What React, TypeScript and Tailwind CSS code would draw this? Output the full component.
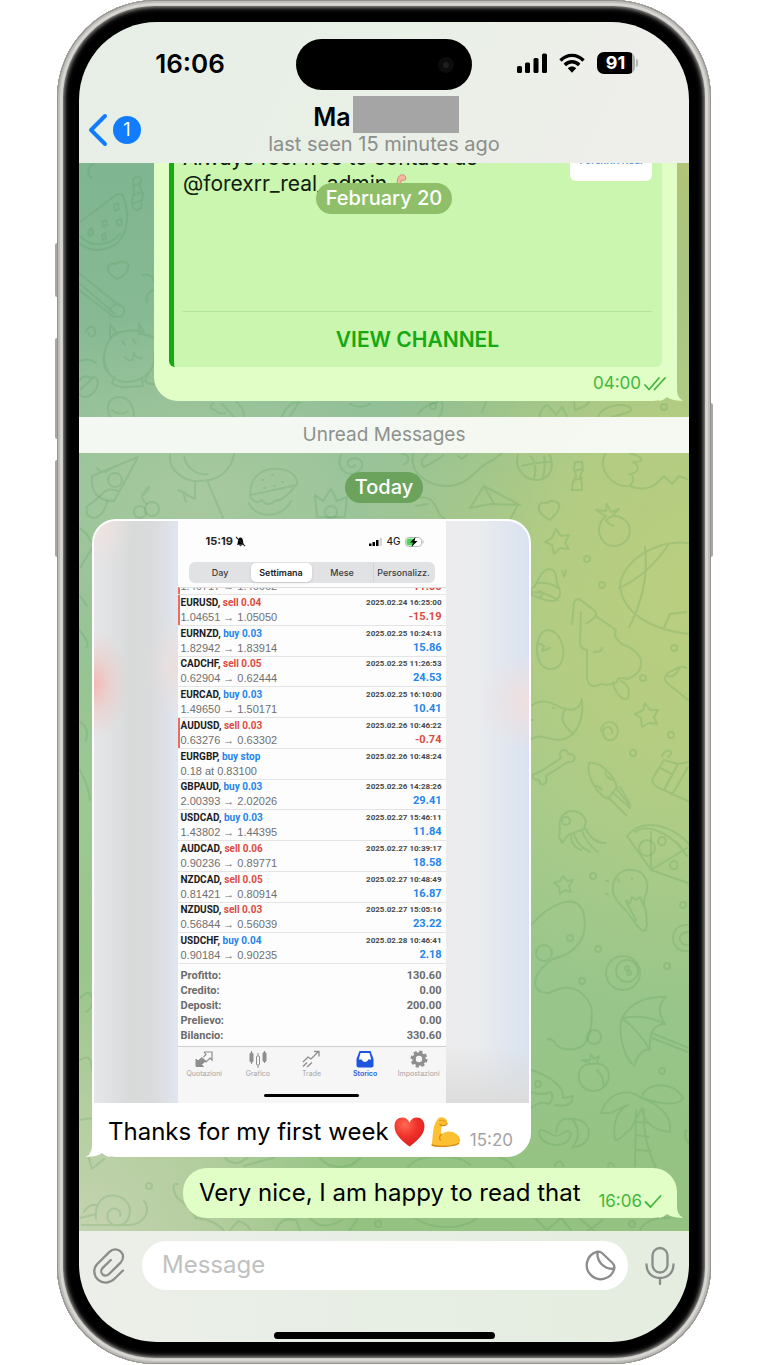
import React from "react";

type Trade = {
  symbol: string;
  side: "buy" | "sell";
  action: string;
  detail: string;
  time: string;
  profit?: string;
  flagged?: boolean;
};

const trades: Trade[] = [
  { symbol: "EURUSD", side: "sell", action: "sell 0.04", detail: "1.04651 → 1.05050", time: "2025.02.24 16:25:00", profit: "-15.19", flagged: true },
  { symbol: "EURNZD", side: "buy", action: "buy 0.03", detail: "1.82942 → 1.83914", time: "2025.02.25 10:24:13", profit: "15.86" },
  { symbol: "CADCHF", side: "sell", action: "sell 0.05", detail: "0.62904 → 0.62444", time: "2025.02.25 11:26:53", profit: "24.53" },
  { symbol: "EURCAD", side: "buy", action: "buy 0.03", detail: "1.49650 → 1.50171", time: "2025.02.25 16:10:00", profit: "10.41" },
  { symbol: "AUDUSD", side: "sell", action: "sell 0.03", detail: "0.63276 → 0.63302", time: "2025.02.26 10:46:22", profit: "-0.74", flagged: true },
  { symbol: "EURGBP", side: "buy", action: "buy stop", detail: "0.18 at 0.83100", time: "2025.02.26 10:48:24" },
  { symbol: "GBPAUD", side: "buy", action: "buy 0.03", detail: "2.00393 → 2.02026", time: "2025.02.26 14:28:26", profit: "29.41" },
  { symbol: "USDCAD", side: "buy", action: "buy 0.03", detail: "1.43802 → 1.44395", time: "2025.02.27 15:46:11", profit: "11.84" },
  { symbol: "AUDCAD", side: "sell", action: "sell 0.06", detail: "0.90236 → 0.89771", time: "2025.02.27 10:39:17", profit: "18.58" },
  { symbol: "NZDCAD", side: "sell", action: "sell 0.05", detail: "0.81421 → 0.80914", time: "2025.02.27 10:48:49", profit: "16.87" },
  { symbol: "NZDUSD", side: "sell", action: "sell 0.03", detail: "0.56844 → 0.56039", time: "2025.02.27 15:05:16", profit: "23.22" },
  { symbol: "USDCHF", side: "buy", action: "buy 0.04", detail: "0.90184 → 0.90235", time: "2025.02.28 10:46:41", profit: "2.18" },
];

const totals = [
  ["Profitto:", "130.60"],
  ["Credito:", "0.00"],
  ["Deposit:", "200.00"],
  ["Prelievo:", "0.00"],
  ["Bilancio:", "330.60"],
];

function Wallpaper() {
  return (
    <div className="absolute inset-0 bg-[radial-gradient(ellipse_340px_420px_at_100%_40%,#bace7f_0%,#b8ce7fdd_40%,#b8ce7f00_100%),radial-gradient(ellipse_200px_300px_at_100%_0%,#b3c577_0%,#b3c57700_100%),radial-gradient(ellipse_280px_260px_at_0%_100%,#c4d3b0_0%,#c0d2aab0_50%,#c0d2aa00_100%),radial-gradient(ellipse_300px_180px_at_20%_31%,#a8c99f_0%,#a8c99f00_100%),linear-gradient(180deg,#7fb591_0%,#8fbf96_30%,#9cc892_60%,#94c281_100%)]">
      <svg
        className="h-full w-full"
        viewBox="79 163 610 1068"
        preserveAspectRatio="xMidYMid slice"
        fill="none"
        stroke="#4f9455"
        strokeOpacity="0.2"
        strokeWidth="2"
        strokeLinecap="round"
        strokeLinejoin="round"
        aria-hidden="true"
      >
        <path d="M80 222 116 195q6-4 8 4c8 24 0 44-16 49-12 4-22 1-29-5M80 236c10 12 30 10 40-2" />
        <path d="M114 205l4-2 1 6-4 2zM102 222l4-2 1 5-4 2zM116 221l5-2 1 5-4 2zM88 231l4-3 1 6-4 2zM102 235l3-2 1 6-3 1z" />
        <path d="M93 164c-6 4-6 10-1 14M133 179q5-5 8 0l-1 8 3 7-2 14q-5 4-8 0l-1-8 2-7zM133 186l8-3M134 195l8-3M134 203l8-3" />
        <path d="M118 279c-16-7-10-18-2-15 4-4 14-3 12 4-1 5-6 9-10 11z" />
        <path d="M79 273l38 31c8 2 9 8 5 12l-8 1-35-27M84 277l36 29M79 283l36 31M110 316c-2-6 3-12 9-12" />
        <path d="M143 275q8-2 11 6M153 290q-8 4-6 12M86 332c2-8 10-6 9 1-1 5-7 4-6 0M80 361q8-4 16 2" />
        <path d="M108 372c-10-20 2-38 10-38l-8-9v13l4-4q14-6 30-2l-5-8v9M140 334q6 0 14 4M105 352c-6 14 6 30 22 30s30-12 27-30M115 376l-3 7q6 5 16 4l15-1-1-8M148 374l-3 7q4 4 9 3M122 341l3 4M133 339l3 5M125 357q4 6 8 2 0-6 1-6 2 6 8 5" />
        <path d="M80 380q4-6 10-2c8-4 12 6 2 16-5 5-11 3-13 0M80 390l14-13" />
        <path d="M110 417c-6-14 2-20 9-20 9 0 15 8 15 20M112 410c4 4 12 5 16 1M213 403q-6 5 2 7 4 5 10 3M222 404l12 13M236 402q8 5 8 15M282 417q6-16 18-14M290 416l8-12M350 404q10 6 20 0" />
        <path d="M438 402q-14 3-20 12M442 402q2 8-3 15M486 402l-4 10M539 417q2-10 9-12l8 10 6-8 5 9M574 402l1 8q12-4 14-8M598 417c4-12 24-14 32-10 4 6-6 6-18 10" />
        <circle cx="433" cy="406" r="3" /><circle cx="664" cy="407" r="3" />
        <path d="M92 476l46-19-24 44q-24 0-22-25zM97 468q6 8 14 0M114 501l20-36" />
        <circle cx="115" cy="480" r="7" /><path d="M118 491q-10-4-16 3-8 8-15 12c-2 10 3 12 8 12 8-3 12-12 12-17" />
        <path d="M144 495q8-10 4-8l-6 8q0 6 5 9" /><circle cx="140" cy="512" r="6" /><circle cx="152" cy="509" r="7" />
        <path d="M170 455c-2 14 14 28 30 26 22 0 32-14 34-27M184 456c2 12 14 20 24 18M195 481v18l-12-6 3 9M186 493l-8-3M207 480l16 38" />
        <path d="M250 495c0-20 14-28 30-26 12 2 18 8 17 16zM250 497q6 8 12 3 6 8 14 0 6 2 18-12M249 503c6 16 34 16 42-2M262 480h1M272 475h1M282 482h1M264 488h1M274 486h1" />
        <path d="M315 495l8 6 8-12 6 12 10-4-2 20h-28z" /><circle cx="331" cy="512" r="6" />
        <path d="M341 455c-6 12 6 22 14 18 12-4 8-18-4-14-8 4 0 12 4 6" />
        <path d="M402 454c8 0 8 8 2 10M413 454c-4 20 16 32 34 32 24 0 28-20 46-26l8-6M424 467q-6-6 4-13M424 467q12-6 20-12M458 456l4 3 5-4" />
        <path d="M518 455c-4 12 6 26 20 25 14-2 16-14 12-25M522 466q14-4 28-4M530 456q8 6 4 23M544 456q2 8-1 21" />
        <path d="M575 462h7l1 8-3 6 2 8 0 6h-10l1-8 3-6-2-8zM574 471l8-2M574 480l8-2" />
        <path d="M605 454c-8 16 8 34 24 32 8-6 3-12 0-12 12-1 10-10 4-12 16 0 4-8-2-8M630 486q14 6 26-2l8-8 8 8 7-8 8 3" />
        <path d="M470 508l14-22 34 18-12 24M470 508l20-4 30 1M484 486l10 18M411 500c18-8 24 2 28 14l9 8-8 1M416 506l12-2" />
        <path d="M550 520c-16-8-13-20-3-17 5-4 14-1 12 5-2 6-5 8-9 12z" />
        <path d="M606 516c-12 8-8 30 8 30 16 0 22-20 8-28-6-3-12-2-16 2q2 4 8 6M606 516l-10-6 10 1 1-7 4 8 8-3-6 6" />
        <path d="M556 529l5 7 8-1-4 8 4 6-9-1-6 6-2-9-7-3 7-4z" />
        <circle cx="587" cy="559" r="3" /><circle cx="602" cy="585" r="3" /><circle cx="674" cy="648" r="3" /><circle cx="643" cy="678" r="3" /><circle cx="671" cy="735" r="3" /><circle cx="633" cy="753" r="3" />
        <path d="M535 586l4-8c5-9 11-11 15-7 4 5 1 12 5 17 3 7-1 13-7 13-8 0-15-4-20-6-3-4 0-7 3-9zM537 583q12-1 21 5M532 592q14 0 26 8M539 591a3 3 0 1 1 0 6M562 571l2 5M566 570l-2 7" />
        <path d="M572 624l2-21q2-7 8-2l13 10q3 4-2 8l-6 4M596 616l20 14q-4 6 6 14 20 8 19 20 0 10-14 15-10-3-10 3-8 4-16 2-12 6-14-6v-28q-8-1-7-10l1-28M594 652q8 0 8-4M613 682c1 12 16 26 16 10 0-6-5-10-8-11" />
        <path d="M548 630c-14 0-16 38 2 39 20 1 16-38-2-39zM538 643l6 3-2 5 8-3" />
        <path d="M531 706c10-8 20-4 29 1 12 6 20 2 22-8 2 18-4 36-18 40s-22-8-34 1M565 710q-8 12 9 24M553 708h1M531 720h2" />
        <path d="M535 774l8-4 18-12c-4-9 6-11 7-4 9-1 9 9 0 8l-22 14c2 10-6 11-7 4-8 0-7-6-4-6z" />
        <path d="M589 763c10-2 24 10 28 24l-9 12c-10-4-22-22-19-36zM605 772q1 6 8 8M595 787q2-3 7 3M608 797l18 18M612 792l18 16M616 788l14 18M620 787l10 17" />
        <path d="M688 543c-34-4-66 20-68 42 2 28 30 44 68 49M645 547c4 30-5 60-16 80M619 588q28-12 50-44M664 628l6-14 16-2" />
        <path d="M688 700l-22-18q-4-8 8-12 8-5 12-2M667 676q8 2 12-7M645 703l5 7 8 0-4 7 3 7-8-1-7 4-1-9-6-4 8-4zM601 731c1-12 16-12 17 0 0 12-15 12-15 2 0-8 10-8 9 0" />
        <path d="M654 776l10-16 14 4-14 26q-16-5-10-14zM664 790l26 12M678 764l10-2M662 756c4-10 14-4 6 1M672 795l16-28M660 768l12 6" />
        <path d="M560 829c-4-20 20-24 26-8l-2 8-16 6-6 8-3-6zM574 833q2 12 16 19M582 831q4 12 16 21M586 829q6 14 20 14M571 836q0 10 10 14" /><circle cx="566" cy="821" r="4" />
        <path d="M627 836c16-20 46-10 62 8M627 836l24 34 37 13M635 832c14-10 40 4 52 24M651 832v38l36-22" /><circle cx="647" cy="848" r="8" /><path d="M662 837c6 0 4 10-1 8-5-2-3-8 1-8zM674 861c6 0 4 10-1 8-5-2-3-8 1-8z" />
        <path d="M563 876l4 5 6-1-4 6 2 6-6-2-5 4-1-7-5-4 6-2z" />
        <path d="M637 921l-4-5c-2-6-16-14-17-24-2-16 10-24 20-22 12 1 18 14 12 26-2 5-1 10 1 16M637 921q6 10 11 10l2-6-1-13M639 920l-10-19 4 2 2-6 4 3 4-3 6 14M611 881h-2M609 894h2M622 882l-1-3M635 878v2" transform="translate(-3 0)" />
        <circle cx="593" cy="876" r="3" /><circle cx="683" cy="905" r="3" /><circle cx="570" cy="938" r="3" /><circle cx="598" cy="949" r="3" /><circle cx="582" cy="981" r="3" /><circle cx="667" cy="966" r="3" /><circle cx="662" cy="1071" r="3" />
        <path d="M688 925c-20-2-20 28 0 26M688 932c-12 0-10 14 0 13" />
        <path d="M531 925c20-22 44-32 52-14 6 24-4 42-30 48-20 12-26 34-4 34 12-6 26-10 38 6 8 10 4 24 3 34-4 18-22 20-34 12q-2-6-8-6" /><circle cx="594" cy="1037" r="7" /><circle cx="544" cy="953" r="8" />
        <circle cx="623" cy="973" r="17" /><circle cx="627" cy="971" r="11" /><circle cx="627" cy="968" r="2" /><circle cx="629" cy="973" r="2" />
        <path d="M622 1018c8-16 26-22 44-21-9 8-7 18-1 27-12 0-16 10-15 26-6-2-12 4-16 16-12-12-16-34-12-48zM622 1018q24-4 43 6M622 1018q18 14 28 32M654 1034l35 14M652 1038l36 14" />
        <path d="M592 1064c-18-2-18 27 2 27 20-1 20-32-2-27zM597 1070q8 8 6 18M590 1064l-8-4 8 0 1-6 3 5 5-3-2 6" />
        <path d="M641 1098c-14-12-34-4-40 15 14 2 18-6 27-8-10 4-16 18-13 35 8 0 8-8 15-10l12-22c2 16 12 22 28 24 2-14-8-26-28-34 10 4 36 10 41 0-8-16-36-18-42 0zM636 1110l-1 56M644 1110q-2 28 12 58M637 1122l10 1M636 1135l13 2M637 1150l14 1" />
        <path d="M531 1070c20 6 34 18 32 28l10-2q0 12-18 9M531 1108q10-8 18-4 6-6 2-12-10 4-20 0" /><circle cx="538" cy="1084" r="3" />
        <path d="M539 1133c2 14 30 18 32 0-8-6-8 6-18 2-8-4-14-8-14-2zM556 1132c2-14 10-14 15-13 20-2 26 24 4 28M572 1119q12 14 0 29" />
        <path d="M686 1130q-3 6 3 14M555 1166c0-6 8-6 8 0M608 1166c0-4 4-4 6 0" />
        <path d="M79 528q8 4 12 14M80 568l12-20M80 596l7 10M79 630q12 14 7 18M80 722q10 6 6 18M80 770q10 20 10 30M80 998q10-10 12 0t-6 14M80 1060q12-8 12 10M80 1120q12-4 20 2" />
        <path d="M88 1155l4 14 12-10" /><circle cx="149" cy="1186" r="3" />
        <path d="M178 1184c-8-2-4 12 2 16q8 6 16 18M80 1218l16-4M82 1225h48c18-2 20-18 14-24M96 1219c-4-36 44-26 32 0-6 12-24 6-20-6 4-8 14-4 12 3M84 1212q6-10 14-6" />
        <path d="M196 1218q20 2 28 13M230 1230l8-9q8 2 12 8M276 1230q6-14 18-10M296 1220l4 10M310 1218q12 14 32 2M350 1230l8-12M415 1218c16 12 48 12 62 0M535 1218l12 12 14-12 10 12M580 1219l14 11M602 1220q-8 8-14 10M640 1230q8-14 30-12" /><circle cx="378" cy="1224" r="3" /><circle cx="632" cy="1224" r="3" />
        <path d="M225 1158q10 10 22 0M244 1166q20-6 30-8M320 1158c10 12 30 12 40 0M408 1167c10-14 50-14 62-2M500 1158q10 2 14 10" />
      </svg>
    </div>
  );
}

function RightTail() {
  return (
    <svg className="absolute right-[-6px] bottom-0 h-6 w-6 text-[#e1fec6]" viewBox="0 0 24 24" fill="currentColor" aria-hidden="true">
      <path d="M18 0v11c0 6 1 10 6 12.700C17 24 12 23 8 20c-2.500 2.500-5 3.600-8 4V0z" />
    </svg>
  );
}

function StatusIcons() {
  return (
    <div className="flex items-center gap-3">
      <svg className="h-5 w-[30px]" viewBox="0 0 30 20" aria-hidden="true">
        <rect x="0" y="13" width="5" height="7" rx="1.500" />
        <rect x="8" y="9.500" width="5" height="10.500" rx="1.500" />
        <rect x="16.500" y="5" width="5" height="15" rx="1.500" />
        <rect x="25" y="0.500" width="5" height="19.500" rx="1.500" />
      </svg>
      <svg className="h-5 w-[26px]" viewBox="0 0 26 20" fill="none" stroke="#000" strokeWidth="3.400" aria-hidden="true">
        <path d="M1.500 7.500C8 .6 18 .6 24.500 7.500" />
        <path d="M5.800 12c4.200-4.300 10.200-4.300 14.400 0" />
        <path d="M8.800 15.300c2.400-2.400 6-2.400 8.400 0L13 19.700z" fill="#000" stroke="none" />
      </svg>
      <div className="flex items-center gap-px">
        <span className="flex h-[22px] w-[38px] items-center justify-center rounded-[7px] bg-[linear-gradient(90deg,#000_91%,#a9aca8_91%)] pr-px text-[18px] leading-none font-bold text-white">91</span>
        <span className="h-2 w-[2px] rounded-r-full bg-[#b4b7b2]" />
      </div>
    </div>
  );
}

function Header() {
  return (
    <header className="relative bg-[linear-gradient(115deg,#e6eee6_0%,#e9f0e6_50%,#eeeeea_85%)] pb-[7px]">
      <div className="grid grid-cols-[1fr_176px_1fr] items-center pt-[17px]">
        <span className="pb-[2px] pl-[5px] text-center text-[26px] leading-[49px] font-semibold">16:06</span>
        <span className="flex h-[51px] items-center justify-end rounded-full bg-black pr-[18px]">
          <span className="flex h-4 w-4 items-center justify-center rounded-full bg-[#0c0c0d]">
            <span className="h-[6px] w-[6px] rounded-full bg-[#1d1e20]" />
          </span>
        </span>
        <span className="flex justify-center pr-[6px] pb-[3px]">
          <StatusIcons />
        </span>
      </div>
      <div className="grid grid-cols-[1fr_auto_1fr] items-center pt-[6px]">
        <button type="button" aria-label="Back" className="flex items-center gap-[5px] pt-[7px] pl-[9px]">
          <svg className="h-[34px] w-5" viewBox="0 0 20 34" fill="none" stroke="#117dfe" strokeWidth="4" strokeLinecap="round" strokeLinejoin="round" aria-hidden="true">
            <path d="M17 3 3 17l14 14" />
          </svg>
          <span className="flex h-7 w-7 items-center justify-center rounded-full bg-[#117dfe] text-[18px] leading-none text-white">1</span>
        </button>
        <div className="flex flex-col items-center">
          <h1 className="flex h-[37px] items-center pl-1 text-[25px] font-semibold">
            <span className="pt-[6px]">Ma</span>
            <span className="ml-[2px] h-full w-[106px] bg-[#a5a5a5]" />
          </h1>
          <p className="text-[20px] leading-[23px] text-[#8b8e8a]">last seen 15 minutes ago</p>
        </div>
        <span />
      </div>
    </header>
  );
}

function DateChip({ children, tone }: { children: React.ReactNode; tone: string }) {
  return <span className={`rounded-full px-[10px] text-[20px] leading-[31px] font-medium text-white ${tone}`}>{children}</span>;
}

function ChannelMessage() {
  return (
    <article className="relative ml-[75px] mr-3 rounded-b-[24px] bg-[#e1fec6]">
      <div className="overflow-hidden px-[15px]">
        <div className="-mt-[18px] overflow-hidden rounded-md border-l-[5px] border-[#15a912] bg-[#caf6af] pr-[10px] pl-[9px]">
          <div className="flex h-[167px] items-start justify-between border-b border-[#b3e49b]">
            <p className="whitespace-nowrap text-[21px] leading-[26px] text-[#10200c]">
              Always feel free to contact us
              <br />
              @forexrr_real_admin{" "}
              <svg className="inline-block h-5 w-4 align-[-3px]" viewBox="0 0 16 20" aria-hidden="true">
                <path d="M3 18C5 10 3 3 8 1c4-1 6 2 4 5-2 1-4-1-4 1-1 4 3 4 5 7 0 4-6 6-10 4z" fill="#f3b9a0" stroke="#d98580" />
              </svg>
            </p>
            <span className="flex h-9 w-[82px] items-end justify-center rounded-md bg-white pb-[14px] text-[10px] leading-[13px] font-semibold whitespace-nowrap text-[#5b95d6]">ForexRR Real</span>
          </div>
          <button type="button" className="block w-full text-center text-[21px] leading-[55px] font-semibold text-[#15a912]">VIEW CHANNEL</button>
        </div>
      </div>
      <p className="relative z-10 flex items-center justify-end gap-[3px] pt-[4px] pr-[11px] pb-[5px] text-[17px] leading-[25px] text-[#3fb83c]">
        04:00
        <svg className="h-4 w-[22px]" viewBox="0 0 22 16" fill="none" stroke="currentColor" strokeWidth="1.800" strokeLinecap="round" strokeLinejoin="round" aria-label="Read">
          <path d="M1 9l4 4.500L15 2M10.500 13.500L21 2" />
        </svg>
      </p>
      <RightTail />
    </article>
  );
}

function TabIcon({ name }: { name: string }) {
  if (name === "Quotazioni")
    return (
      <svg className="h-[18px] w-[18px]" viewBox="0 0 18 18" aria-hidden="true">
        <path d="M1 16.500h7.500L6.500 14.500 10.500 11 7 7.500 3 11 1 9z" fill="#8e8e8e" stroke="#8e8e8e" />
        <path d="M9 2h8v8l-2-2-4 4-1.500-1.500M8.500 7 11 4.500 9 2" fill="none" stroke="#8e8e8e" strokeWidth="1.200" />
      </svg>
    );
  if (name === "Grafico")
    return (
      <svg className="h-[18px] w-[18px]" viewBox="0 0 18 18" fill="#8e8e8e" stroke="#8e8e8e" aria-hidden="true">
        <path d="M2.500 1v13M15.500 1v12M9 3v15" />
        <rect x="1" y="3" width="3" height="9" rx="1" />
        <rect x="14" y="2.500" width="3" height="9" rx="1" />
        <rect x="7.500" y="6" width="3" height="9" rx="1" fill="#f6f6f6" />
      </svg>
    );
  if (name === "Trade")
    return (
      <svg className="h-[18px] w-[18px]" viewBox="0 0 18 18" fill="none" stroke="#8e8e8e" strokeWidth="1.300" aria-hidden="true">
        <path d="M1 12l5-5 3 2 7.500-7.500M12 1.500h5v5M1 16.500l4-4M5 17l5-4.500" />
      </svg>
    );
  if (name === "Storico")
    return (
      <svg className="h-[18px] w-[18px]" viewBox="0 0 18 18" aria-hidden="true">
        <path d="M3.500 1h11L17.500 9v6.500a2 2 0 0 1-2 2h-13a2 2 0 0 1-2-2V9z" fill="#1c55e0" />
        <path d="M4.500 3h9l1.700 6.500h-3c-.5 1.500-1.500 2.500-3.200 2.500s-2.700-1-3.200-2.500h-3z" fill="#fff" />
      </svg>
    );
  return (
    <svg className="h-[18px] w-[18px]" viewBox="0 0 18 18" fill="none" stroke="#8e8e8e" aria-hidden="true">
      <circle cx="9" cy="9" r="5" strokeWidth="3.600" />
      <circle cx="9" cy="9" r="7.400" strokeWidth="2.200" strokeDasharray="3.300 2.510" />
    </svg>
  );
}

function TradeHistory() {
  return (
    <div className="w-[268px] bg-[#fdfdfd] font-['Roboto','Liberation_Sans',sans-serif]">
      <div className="flex h-[41px] items-center justify-between pr-[22px] pl-7 font-['Inter',sans-serif] text-[#222]">
        <span className="flex items-center gap-[2px] text-[11px] font-bold">
          15:19
          <svg className="h-[11px] w-[11px]" viewBox="0 0 12 12" aria-hidden="true">
            <path d="M2 9.500c1-1 1-2 1.200-4C3.500 3 4.500 1.500 6 1.500S8.500 3 8.800 5.500c.2 2 .2 3 1.200 4zM4.500 10.200h3C7 11.500 5 11.500 4.500 10.200z" />
            <path d="M1 1l10 10" stroke="#222" strokeWidth="1.200" />
          </svg>
        </span>
        <span className="flex items-center gap-1 text-[10px] font-medium">
          <svg className="h-2 w-[13px]" viewBox="0 0 13 8" aria-hidden="true">
            <path d="M0 5.500h2.500V8H0zM3.500 4H6v4H3.500zM7 2h2.500v6H7z" />
            <path d="M10.500 0H13v8h-2.500z" fill="#d5d5d5" />
          </svg>
          4G
          <svg className="h-[10px] w-[19px]" viewBox="0 0 19 10" aria-hidden="true">
            <rect x="0.500" y="0.500" width="16" height="9" rx="3" fill="#fff" stroke="#b9b9b9" />
            <path d="M4 1.500h4v7H4a2.500 2.500 0 0 1-2.500-2.500V4A2.500 2.500 0 0 1 4 1.500z" fill="#4fd35a" />
            <path d="M10.500 0 5 5.500h3L6.500 10 12.500 4h-3z" />
            <path d="M18 3.500v3" stroke="#b9b9b9" />
          </svg>
        </span>
      </div>
      <div className="mx-[11px] grid grid-cols-4 rounded-md bg-[#e1e2e4] p-px text-center font-['Inter',sans-serif] text-[9px] leading-[19px] font-medium whitespace-nowrap text-[#3c3c3e]">
        <span>Day</span>
        <span className="rounded-[5px] bg-white font-semibold text-[#222] shadow-sm">Settimana</span>
        <span>Mese</span>
        <span className="border-l border-[#d2d3d5]">Personalizz.</span>
      </div>
      <div className="mt-1 flex h-[7px] items-end justify-between overflow-hidden border-t border-l-2 border-t-[#ddd] border-l-[#ec6a60] pr-1 pl-px text-[11px] leading-[15px]">
        <span className="font-['Liberation_Sans',sans-serif] text-[#777]">1.46717 → 1.46662</span>
        <span className="font-bold text-[#dd4a3f]">-11.66</span>
      </div>
      <table className="h-[369px] w-full border-collapse">
        <tbody>
          {trades.map((t) => (
            <tr key={t.symbol} className={`border-t border-[#e4e4e4] ${t.flagged ? "shadow-[inset_2px_0_0_#ec6a60]" : ""}`}>
              <td className="p-0 pl-[3px] align-middle whitespace-nowrap">
                <p className="text-[10px] leading-[14px] font-bold text-[#1c1c1c]">
                  {t.symbol}, <span className={t.side === "buy" ? "text-[#2485ea]" : "text-[#dd4a3f]"}>{t.action}</span>
                </p>
                <p className="font-['Liberation_Sans',sans-serif] text-[11px] leading-[14px] text-[#707070]">{t.detail}</p>
              </td>
              <td className="p-0 pr-1 text-right align-middle whitespace-nowrap">
                <p className="text-[8px] leading-[14px] font-bold text-[#484848]">{t.time}</p>
                <p className={`h-[14px] text-[11px] leading-[14px] font-bold ${t.profit?.startsWith("-") ? "text-[#dd4a3f]" : "text-[#2485ea]"}`}>{t.profit}</p>
              </td>
            </tr>
          ))}
        </tbody>
      </table>
      <dl className="border-t border-[#e4e4e4] px-[3px] pt-1 pb-[3px] text-[11px] leading-[15px] font-bold text-[#6b6b6b]">
        {totals.map(([label, value]) => (
          <div key={label} className="flex justify-between pr-px">
            <dt>{label}</dt>
            <dd>{value}</dd>
          </div>
        ))}
      </dl>
      <div className="border-t border-[#cfcfcf] bg-[#f6f6f6] font-['Inter',sans-serif]">
        <div className="grid grid-cols-5 pt-[3px]">
          {["Quotazioni", "Grafico", "Trade", "Storico", "Impostazioni"].map((name) => (
            <span key={name} className={`flex flex-col items-center text-[7px] leading-[12px] ${name === "Storico" ? "font-semibold text-[#2563d9]" : "text-[#a5a5a5]"}`}>
              <TabIcon name={name} />
              {name}
            </span>
          ))}
        </div>
        <div className="pt-[14px] pb-[6px]">
          <div className="mx-auto h-[3px] w-[95px] rounded-full bg-black" />
        </div>
      </div>
    </div>
  );
}

function PhotoMessage() {
  return (
    <article className="relative ml-[13px] w-[439px] rounded-[24px] bg-white p-[2px] pb-0">
      <svg className="absolute bottom-0 left-[-6px] h-6 w-6 text-white" viewBox="0 0 24 24" fill="currentColor" aria-hidden="true">
        <path d="M6 0v11c0 6-1 10-6 12.700C7 24 12 23 16 20c2.500 2.500 5 3.600 8 4V0z" />
      </svg>
      <div className="relative flex overflow-hidden rounded-t-[22px]">
        <div className="flex-1 bg-[radial-gradient(ellipse_34px_54px_at_0%_28%,#f3b9b4_0%,#f0c4c080_50%,#f3b9b400_100%),radial-gradient(ellipse_30px_50px_at_100%_25%,#ecdedc_0%,#ecdedc00_100%),radial-gradient(ellipse_40px_50px_at_0%_0%,#f0e2e0_0%,#f0e2e000_100%),linear-gradient(90deg,#e6e7e9_0%,#d8d9d9_45%,#dadbdc_70%,#e0e6ef_100%)]" />
        <TradeHistory />
        <div className="flex-1 bg-[radial-gradient(ellipse_50px_50px_at_100%_31%,#f0dfde_0%,#f0dfde00_100%),linear-gradient(180deg,#ececec00_90%,#dcdcdc_100%),linear-gradient(90deg,#ececed_0%,#ebecee_35%,#d9e3f0_100%)]" />
      </div>
      <div className="relative flex items-center pt-[6px] pr-4 pb-[3px] pl-[14px]">
        <p className="flex items-center text-[24px] leading-[45px] whitespace-nowrap">
          Thanks for my first week
          <svg className="ml-[5px] h-[30px] w-[31px]" viewBox="0 0 31 30" role="img" aria-label="❤️">
            <defs>
              <radialGradient id="heart" cx="0.35" cy="0.25" r="0.8">
                <stop offset="0" stopColor="#ff6a55" />
                <stop offset="0.5" stopColor="#f0322b" />
                <stop offset="1" stopColor="#d81f1f" />
              </radialGradient>
            </defs>
            <path d="M15.500 29.500C9.500 25 .5 18.500.5 9.300.5 4 4 .6 8.200.6c3.300 0 6 1.900 7.300 5.200C16.800 2.500 19.500.6 22.800.6 27 .6 30.500 4 30.500 9.300c0 9.200-9 15.700-15 20.200z" fill="url(#heart)" />
          </svg>
          <svg className="ml-[6px] h-[31px] w-[30px]" viewBox="0 0 30 31" role="img" aria-label="💪">
            <path d="M1 27C2 18 2 10 5.500 5 7 1.500 9 .5 12 1.500c3 .8 4.500 2.500 4 5-.5 2-2.500 3-4.500 2.700-1.500 2-1.700 5.500-1.200 9.300 4-3.500 10-4 15-.5 4 3 5 7 2.500 9.500C24 31 6 31 1 29.500z" fill="#fcc032" />
            <path d="M9 8.500c2 1.800 6 1.500 7-1M10.300 18.500c-2 1.500-2 4-1 5.500M27.500 27.500C22 31 6 31 1 29" fill="none" stroke="#d98a12" strokeWidth="1.400" strokeLinecap="round" />
            <path d="M8.500 4.500q3-1.500 6 1" fill="none" stroke="#e09a1e" strokeLinecap="round" />
          </svg>
        </p>
        <span className="ml-auto pt-4 text-[17px] leading-5 text-[#a3a3a3]">15:20</span>
      </div>
    </article>
  );
}

function ReplyMessage() {
  return (
    <article className="relative mr-3 flex w-[494px] items-center self-end rounded-[24px] bg-[#e1fec6] pr-[15px] pl-4">
      <RightTail />
      <p className="relative text-[24px] leading-[50px] whitespace-nowrap">Very nice, I am happy to read that</p>
      <span className="relative ml-auto flex items-center gap-[2px] pt-4 text-[17px] leading-5 text-[#3fb83c]">
        16:06
        <svg className="h-[15px] w-[18px]" viewBox="0 0 18 15" fill="none" stroke="currentColor" strokeWidth="1.800" strokeLinecap="round" strokeLinejoin="round" aria-label="Sent">
          <path d="M1.500 8l5 5L16.500 2" />
        </svg>
      </span>
    </article>
  );
}

function Composer() {
  return (
    <footer className="bg-[linear-gradient(90deg,#ecefe9_0%,#e7eee4_50%,#e4ede0_100%)] pt-[10px] pb-[3px]">
      <form className="flex items-center pr-[14px] pl-3" onSubmit={(e) => e.preventDefault()}>
        <button type="button" aria-label="Attach">
          <svg className="h-9 w-9" viewBox="0 0 36 36" fill="none" stroke="#8a8d89" strokeWidth="2.300" strokeLinecap="round" aria-hidden="true">
            <path d="M32 22.500l-8.500 8.300c-4.600 4.400-11.500 5.200-16.300 1S1.900 20.500 6.300 16L18.500 3.900c3.300-3.200 8.200-3.300 11.300-.3s2.900 7.900-.2 11L18.100 26c-2 2-4.800 2-6.600.3-1.700-1.700-1.700-4.500.2-6.400l8.100-7.900" />
          </svg>
        </button>
        <div className="ml-[15px] flex flex-1 items-center rounded-full bg-white pr-3 pl-5">
          <input aria-label="Message" placeholder="Message" className="h-[49px] min-w-0 flex-1 bg-transparent pb-[2px] text-[24px] outline-none placeholder:text-[#bfc1bf]" />
          <button type="button" aria-label="Stickers">
            <svg className="h-[31px] w-[31px]" viewBox="0 0 31 31" fill="none" stroke="#8a8d89" strokeWidth="2.300" strokeLinejoin="round" aria-hidden="true">
              <path d="M11.500 1.800c2-.5 4-.2 5.500 1.200L27.500 13c1.700 1.700 2.200 3.800 1.700 6A14 14 0 1 1 11.500 1.800zM12.500 1.700c-1 9.800 6.500 17.800 16.700 17" />
            </svg>
          </button>
        </div>
        <button type="button" aria-label="Record voice message" className="ml-[17px]">
          <svg className="h-10 w-[30px]" viewBox="0 0 30 40" fill="none" stroke="#8a8d89" strokeWidth="2.300" strokeLinecap="round" aria-hidden="true">
            <rect x="7.500" y="2" width="15" height="24.500" rx="7.500" />
            <path d="M1.500 18.500c0 8 5.500 13.500 13.500 13.500s13.500-5.500 13.500-13.500M15 32v6" />
          </svg>
        </button>
      </form>
      <div className="mx-auto mt-[42px] h-[7px] w-[221px] rounded-full bg-black" />
    </footer>
  );
}

export default function App() {
  return (
    <main className="min-h-screen bg-white px-[57px] font-['Inter',sans-serif] text-black">
      <div className="relative mx-auto max-w-[654px]">
        <span className="absolute top-[243px] left-[-2px] h-[54px] w-1 rounded bg-[#a9a8a5]" />
        <span className="absolute top-[338px] left-[-2px] h-[101px] w-1 rounded bg-[#a9a8a5]" />
        <span className="absolute top-[460px] left-[-2px] h-[97px] w-1 rounded bg-[#a9a8a5]" />
        <span className="absolute top-[403px] right-[-2px] h-[154px] w-1 rounded bg-[#a9a8a5]" />
        <div className="relative rounded-[98px] bg-black p-[22px] shadow-[inset_0_0_0_1px_#92918e,inset_0_0_1px_3px_#bdbcb8,inset_0_0_1px_6px_#dad8d4,inset_0_0_3px_8px_#6d6c6a,inset_0_0_4px_10px_#1d1d1d]">
          <div className="overflow-hidden rounded-[78px]">
            <Header />
            <section className="relative overflow-hidden" aria-label="Conversation">
              <Wallpaper />
              <div className="relative flex flex-col pb-[13px]">
                <ChannelMessage />
                <div className="mt-4 bg-[#f9fbf7]/95 text-center text-[19px] leading-9 text-[#8d918c]">Unread Messages</div>
                <div className="mt-[19px] mb-4 flex justify-center">
                  <DateChip tone="bg-[#6ba35c]">Today</DateChip>
                </div>
                <PhotoMessage />
                <div className="h-[11px]" />
                <ReplyMessage />
              </div>
              <div className="absolute inset-x-0 top-5 flex justify-center">
                <DateChip tone="bg-[#8fc069]">February 20</DateChip>
              </div>
            </section>
            <Composer />
          </div>
        </div>
      </div>
    </main>
  );
}
